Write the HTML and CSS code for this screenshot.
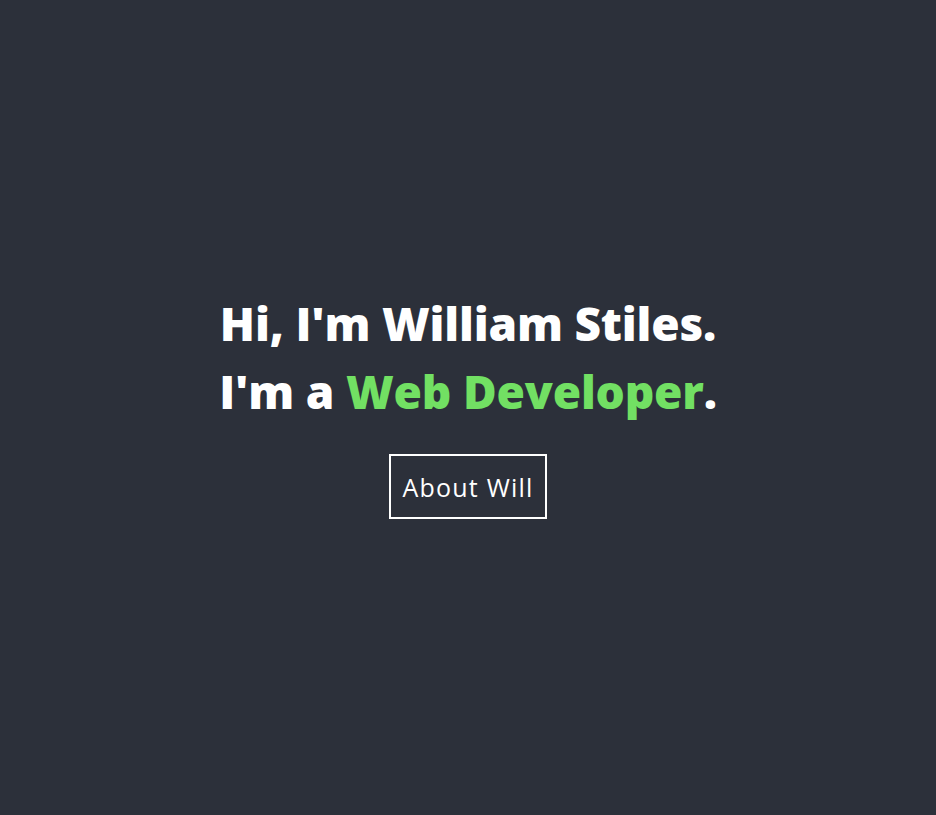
FILE: index.html
```html
<!DOCTYPE html>
<html lang="en">
<head>
<meta charset="utf-8">
<title>William Stiles</title>
<link rel="stylesheet" href="styles.css">
</head>
<body>
<main class="hero">
  <h1 class="hero-title">
    <span class="line">Hi, I'm William Stiles.</span>
    <span class="line">I'm a <span class="accent">Web Developer</span>.</span>
  </h1>
  <a class="hero-btn" href="#about">About Will</a>
</main>
</body>
</html>
```
FILE: styles.css
```css
html, body {
  margin: 0;
  padding: 0;
  height: 100%;
}
body {
  background: #2c303a;
  font-family: "Open Sans", "DejaVu Sans", sans-serif;
  color: #ffffff;
}
.hero {
  box-sizing: border-box;
  height: 815px;
  padding-bottom: 7px;
  display: flex;
  flex-direction: column;
  align-items: center;
  justify-content: center;
  text-align: center;
}
.hero-title {
  margin: 0;
  font-size: 46px;
  font-weight: 800;
  line-height: 68px;
  letter-spacing: -0.2px;
  display: flex;
  flex-direction: column;
}
.accent {
  color: #72e063;
}
.hero-btn {
  margin-top: 29px;
  display: inline-block;
  border: 2px solid #ffffff;
  color: #ffffff;
  text-decoration: none;
  font-size: 25px;
  letter-spacing: 1.2px;
  padding: 14px 12px 13px;
  line-height: 34px;
}
```
